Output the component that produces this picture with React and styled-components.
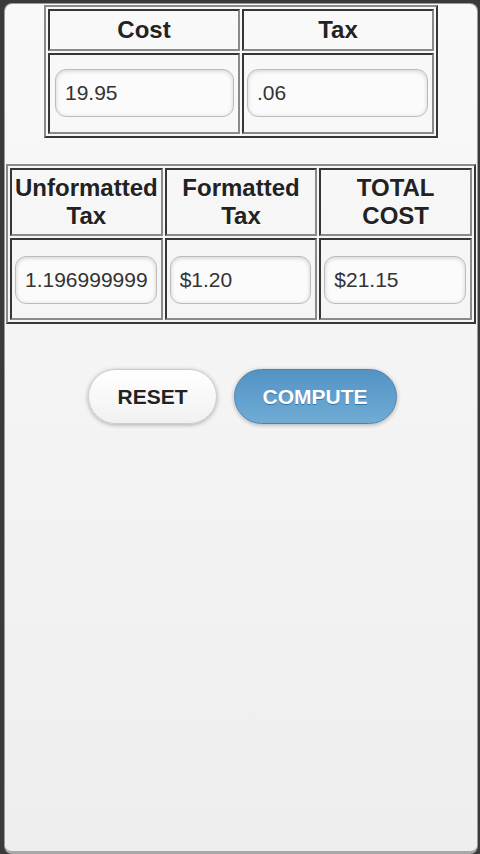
import React from "react";
import styled, { createGlobalStyle } from "styled-components";

const Global = createGlobalStyle`
  html, body {
    margin: 0;
    padding: 0;
    background: #3a3a3a;
  }
  body {
    font-family: "Liberation Sans", Arial, sans-serif;
  }
`;

const Screen = styled.div`
  width: 480px;
  height: 854px;
  box-sizing: border-box;
  padding: 3px 2px 0 4px;
  display: flex;
  background: #3a3a3a;
`;

const Page = styled.div`
  flex: 1;
  box-sizing: border-box;
  border: 1px solid #9a9a9a;
  border-bottom: 3px solid #a8a8a8;
  border-radius: 8px;
  background: linear-gradient(#f9f9f9, #eeeeee);
  display: flex;
  flex-direction: column;
  align-items: center;
  padding-top: 1px;
`;

const Grid = styled.table`
  width: ${(p) => p.$w}px;
  table-layout: fixed;
  border-collapse: separate;
  border-spacing: 2px;
  border: 2px outset #8a8a8a;
  margin-top: ${(p) => p.$mt || 0}px;
`;

const Head = styled.th`
  border: 2px inset #8a8a8a;
  height: ${(p) => p.$h}px;
  box-sizing: border-box;
  padding: 0;
  font-family: "Liberation Sans", Arial, sans-serif;
  font-size: 24px;
  line-height: 28px;
  font-weight: bold;
  color: #222;
  text-align: center;
  text-shadow: 0 1px 0 #fff;
  vertical-align: middle;
  white-space: nowrap;
`;

const Cell = styled.td`
  border: 2px inset #8a8a8a;
  height: ${(p) => p.$h}px;
  box-sizing: border-box;
  padding: ${(p) => p.$pad};
  vertical-align: top;
`;

const Field = styled.input`
  display: block;
  width: 100%;
  height: 48px;
  box-sizing: border-box;
  margin: 0;
  padding: 0 0 0 9px;
  border: 1px solid #bcbcbc;
  border-radius: 11px;
  background: #fbfbfb;
  box-shadow: inset 0 1px 4px rgba(0, 0, 0, 0.18);
  font-family: "Liberation Sans", Arial, sans-serif;
  font-size: 21px;
  color: #333;
  outline: none;
`;

const Buttons = styled.div`
  display: flex;
  gap: 17px;
  margin-top: 45px;
  padding-left: 3px;
`;

const Btn = styled.button`
  height: 55px;
  box-sizing: border-box;
  padding: 0 28px;
  border-radius: 28px;
  font-family: "Liberation Sans", Arial, sans-serif;
  font-size: 21px;
  font-weight: bold;
  cursor: pointer;
  border: 1px solid ${(p) => (p.$primary ? "#4a82b4" : "#cccccc")};
  color: ${(p) => (p.$primary ? "#fff" : "#222")};
  background: ${(p) =>
    p.$primary
      ? "linear-gradient(#5393c5, #6facd5)"
      : "linear-gradient(#ffffff, #f1f1f1)"};
  text-shadow: ${(p) => (p.$primary ? "0 1px 0 #3373a5" : "0 1px 0 #fff")};
  box-shadow: 0 1px 4px rgba(0, 0, 0, 0.3);
`;

export default function App() {
  return (
    <>
      <Global />
      <Screen>
        <Page>
          <Grid $w={394}>
            <tbody>
              <tr>
                <Head $h={42}>Cost</Head>
                <Head $h={42}>Tax</Head>
              </tr>
              <tr>
                <Cell $h={81} $pad="14px 4px 0 5px">
                  <Field defaultValue="19.95" />
                </Cell>
                <Cell $h={81} $pad="14px 4px 0 3px">
                  <Field defaultValue=".06" />
                </Cell>
              </tr>
            </tbody>
          </Grid>
          <Grid $w={470} $mt={26}>
            <tbody>
              <tr>
                <Head $h={68}>
                  Unformatted
                  <br />
                  Tax
                </Head>
                <Head $h={68}>
                  Formatted
                  <br />
                  Tax
                </Head>
                <Head $h={68}>
                  TOTAL
                  <br />
                  COST
                </Head>
              </tr>
              <tr>
                <Cell $h={82} $pad="16px 4px 0 3px">
                  <Field defaultValue="1.196999999" />
                </Cell>
                <Cell $h={82} $pad="16px 4px 0 3px">
                  <Field defaultValue="$1.20" />
                </Cell>
                <Cell $h={82} $pad="16px 4px 0 3px">
                  <Field defaultValue="$21.15" />
                </Cell>
              </tr>
            </tbody>
          </Grid>
          <Buttons>
            <Btn>RESET</Btn>
            <Btn $primary>COMPUTE</Btn>
          </Buttons>
        </Page>
      </Screen>
    </>
  );
}
